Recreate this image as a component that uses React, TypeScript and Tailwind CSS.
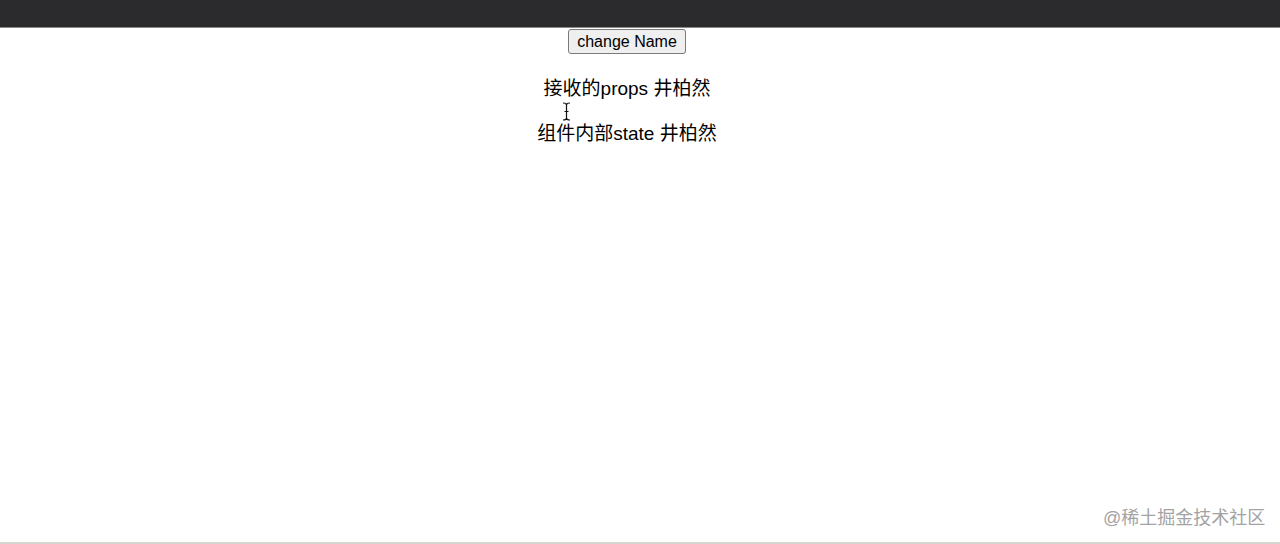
import React from "react";

export default function App() {
  return (
    <div className="relative w-[1280px] h-[544px] bg-white overflow-hidden" style={{ fontFamily: '"Liberation Sans", "Noto Sans CJK SC", sans-serif' }}>
      <div className="h-[27px] bg-[#2b2b2e] border-b border-[#8a8a8a] box-content" />
      <div className="flex flex-col items-center pr-[26px]">
        <button className="mt-[1px] h-[25px] px-[8px] text-[16px] leading-none text-black bg-[#efefef] border border-[#7a7a7a] rounded-[3px]">
          change Name
        </button>
        <p className="mt-[23px] text-[19px] leading-[24px] text-black">接收的props 井柏然</p>
        <p className="mt-[21px] text-[19px] leading-[24px] text-black">组件内部state 井柏然</p>
      </div>
      <svg className="absolute left-[562px] top-[102px]" width="9" height="19" viewBox="0 0 9 19">
        <path d="M1 1 Q4.5 1 4.5 3 Q4.5 1 8 1 M4.5 3 V16 M1 18 Q4.5 18 4.5 16 Q4.5 18 8 18 M2.5 9.5 H6.5" stroke="#111" strokeWidth="1.2" fill="none" />
      </svg>
      <div className="absolute left-[1103px] top-[506px] text-[18px] leading-[24px] text-[#a3a3a3] [text-shadow:0_0_1px_#fff]">
        @稀土掘金技术社区
      </div>
      <div className="absolute left-0 right-0 bottom-0 h-[2px] bg-[#d4d4d0]" />
    </div>
  );
}
